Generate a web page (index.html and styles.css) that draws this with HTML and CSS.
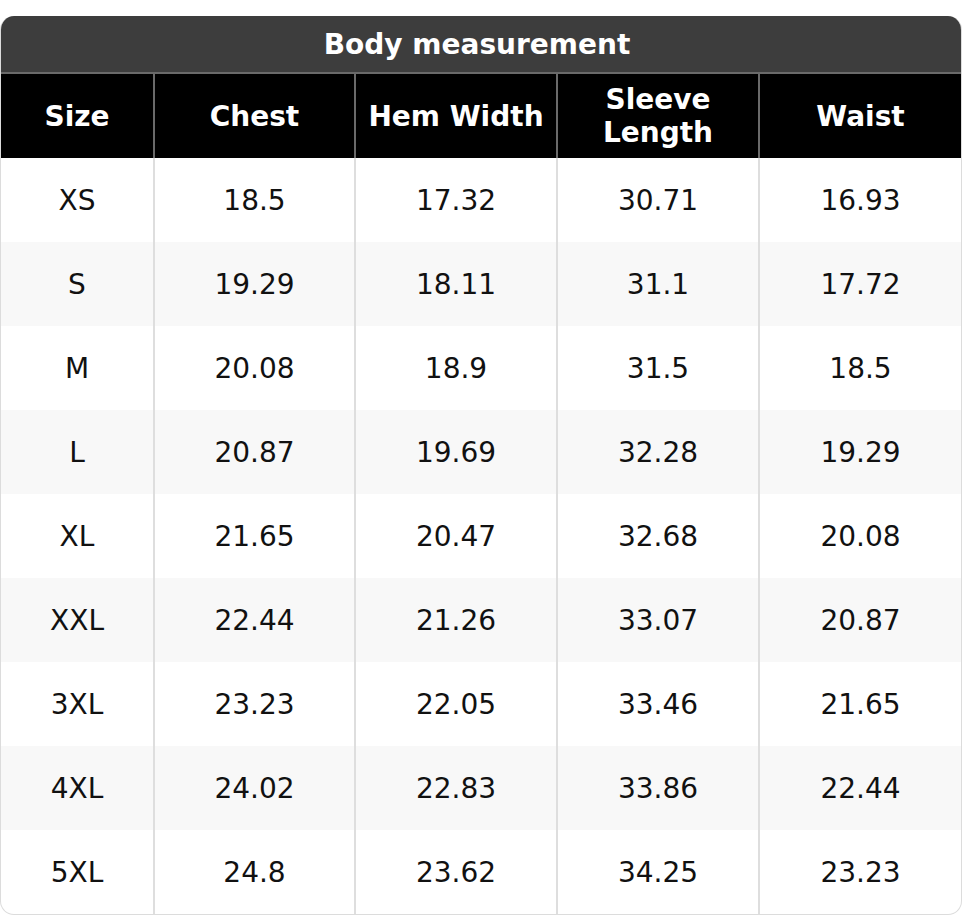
FILE: index.html
```html
<!DOCTYPE html>
<html>
<head>
<meta charset="utf-8">
<link rel="stylesheet" href="styles.css">
</head>
<body>
<div class="page">
  <div class="chart">
    <div class="title">Body measurement</div>
    <table class="sizes">
      <colgroup>
        <col class="c1"><col class="c2"><col class="c3"><col class="c4"><col class="c5">
      </colgroup>
      <thead>
        <tr><th>Size</th><th>Chest</th><th>Hem Width</th><th>Sleeve<br>Length</th><th>Waist</th></tr>
      </thead>
      <tbody>
        <tr><td>XS</td><td>18.5</td><td>17.32</td><td>30.71</td><td>16.93</td></tr>
        <tr><td>S</td><td>19.29</td><td>18.11</td><td>31.1</td><td>17.72</td></tr>
        <tr><td>M</td><td>20.08</td><td>18.9</td><td>31.5</td><td>18.5</td></tr>
        <tr><td>L</td><td>20.87</td><td>19.69</td><td>32.28</td><td>19.29</td></tr>
        <tr><td>XL</td><td>21.65</td><td>20.47</td><td>32.68</td><td>20.08</td></tr>
        <tr><td>XXL</td><td>22.44</td><td>21.26</td><td>33.07</td><td>20.87</td></tr>
        <tr><td>3XL</td><td>23.23</td><td>22.05</td><td>33.46</td><td>21.65</td></tr>
        <tr><td>4XL</td><td>24.02</td><td>22.83</td><td>33.86</td><td>22.44</td></tr>
        <tr><td>5XL</td><td>24.8</td><td>23.62</td><td>34.25</td><td>23.23</td></tr>
      </tbody>
    </table>
  </div>
</div>
</body>
</html>
```
FILE: styles.css
```css
html, body {
  margin: 0;
  padding: 0;
  background: #ffffff;
}
.page {
  padding-top: 16px;
  font-family: "DejaVu Sans", Verdana, sans-serif;
}
.chart {
  width: 962px;
  box-sizing: border-box;
  border: 1px solid #dcdcdc;
  border-top: none;
  border-radius: 14px;
  overflow: hidden;
}
.title {
  height: 56px;
  background: #3d3d3d;
  color: #ffffff;
  font-weight: bold;
  font-size: 28px;
  display: flex;
  align-items: center;
  justify-content: center;
  padding-right: 8px;
  border-bottom: 2px solid #6a6a6a;
  margin: 0 -1px;
}
.sizes {
  width: 100%;
  border-collapse: separate;
  border-spacing: 0;
  table-layout: fixed;
}
.c1 { width: 152px; }
.c2 { width: 201px; }
.c3 { width: 202px; }
.c4 { width: 202px; }
.sizes th {
  background: #000000;
  color: #ffffff;
  font-weight: bold;
  font-size: 28px;
  height: 84px;
  padding: 0;
  text-align: center;
  vertical-align: middle;
  line-height: 33px;
  border-left: 2px solid #6a6a6a;
}
.sizes th:first-child { border-left: none; }
.sizes td {
  font-size: 28px;
  color: #111111;
  height: 84px;
  padding: 0;
  text-align: center;
  vertical-align: middle;
  border-left: 2px solid #dedede;
}
.sizes td:first-child { border-left: none; }
.sizes tbody tr:nth-child(even) td { background: #f8f8f8; }
```
